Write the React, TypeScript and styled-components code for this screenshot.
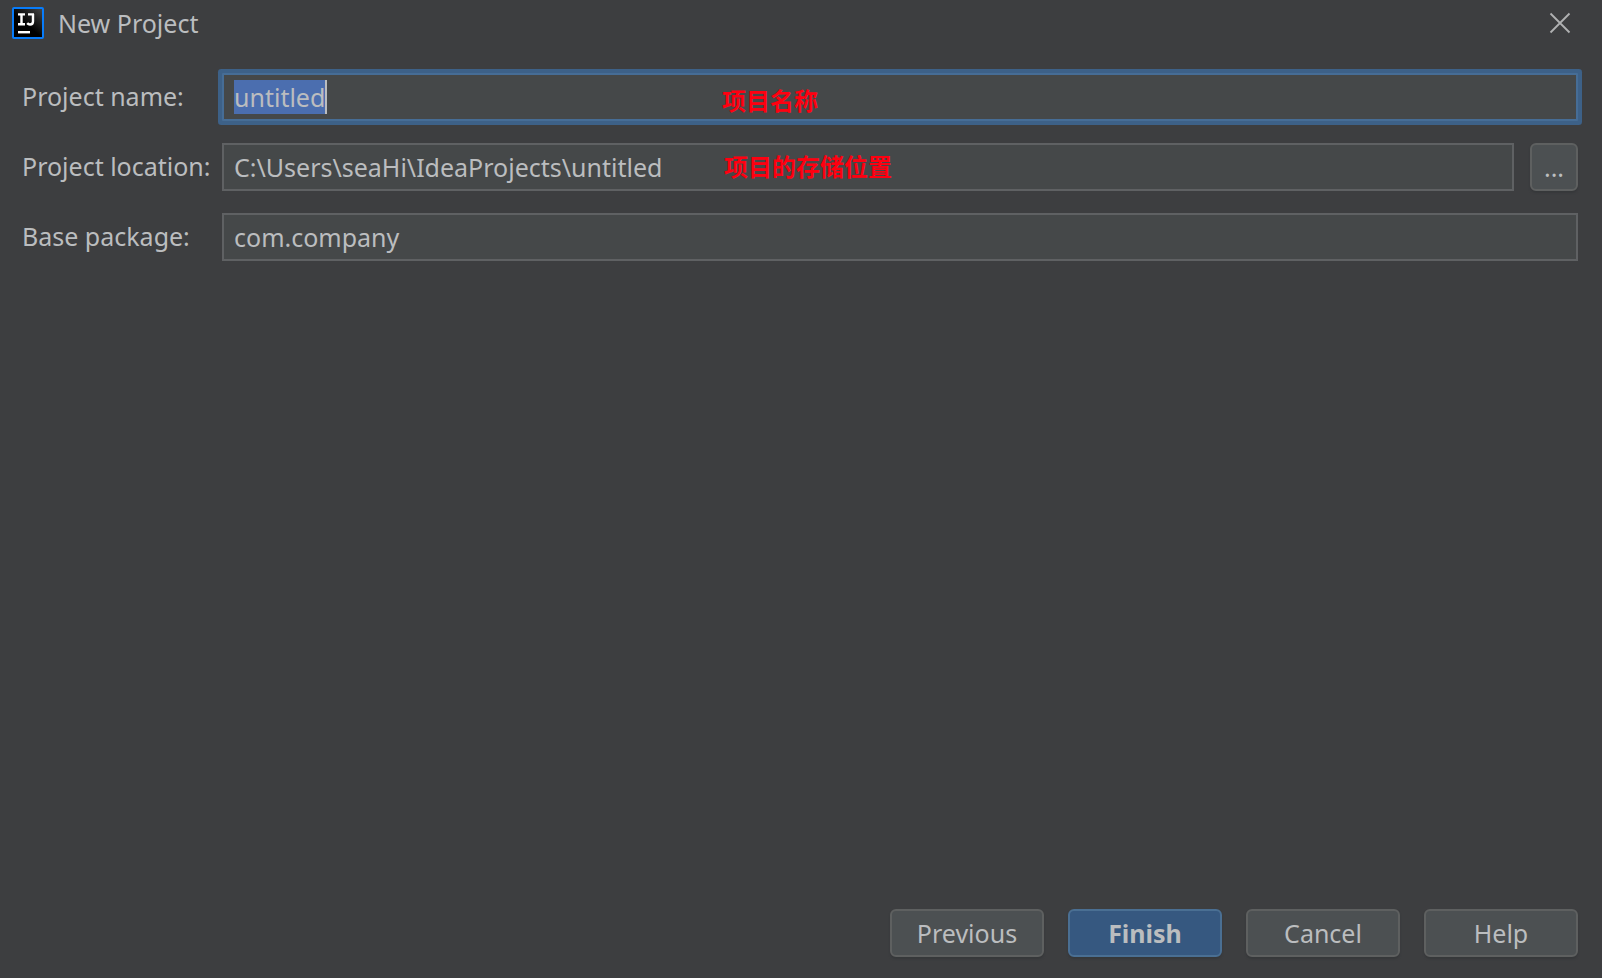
import React, { useEffect, useRef } from "react";
import styled, { createGlobalStyle, css } from "styled-components";

const GlobalStyle = createGlobalStyle`
  *, *::before, *::after { box-sizing: border-box; }
  html, body { margin: 0; background: #3d3e40; }
  body, input, button {
    font-family: "Noto Sans", "Noto Sans CJK SC", sans-serif;
    font-size: 25px;
    line-height: 34px;
    color: #bbbdbf;
  }
`;

const Dialog = styled.main`
  display: flex;
  flex-direction: column;
  min-height: 100vh;
`;

const TitleBar = styled.header`
  display: flex;
  align-items: center;
  gap: 14px;
  height: 46px;
  padding: 0 26px 0 12px;
`;

const Title = styled.h1`
  flex: 1;
  margin: 0;
  font-size: 25px;
  font-weight: 400;
`;

const CloseButton = styled.button`
  display: flex;
  align-items: center;
  justify-content: center;
  width: 32px;
  height: 32px;
  padding: 0;
  border: 0;
  background: none;
`;

const Form = styled.form`
  flex: 1;
  display: flex;
  flex-direction: column;
  padding: 27px 24px 21px 22px;
`;

const Fields = styled.div`
  flex: 1;
  display: flex;
  flex-direction: column;
  gap: 22px;
`;

const Row = styled.div`
  display: flex;
  align-items: center;
  height: 48px;
`;

const Label = styled.label`
  flex: 0 0 200px;
  padding-bottom: 3px;
  white-space: nowrap;
`;

const FieldBox = styled.div<{ $active?: boolean }>`
  position: relative;
  flex: 1;
  display: flex;
  align-items: center;
  min-width: 0;
  height: 48px;
  padding: 0 10px;
  border: 2px solid #5f6163;
  background: #454849;
  ${(p) =>
    p.$active &&
    css`
      border-color: #466d96;
      box-shadow: 0 0 0 4px #3d6188;
      border-radius: 1px;
    `}
`;

const Input = styled.input<{ $fit?: boolean }>`
  flex: ${(p) => (p.$fit ? "0 0 auto" : "1")};
  ${(p) => p.$fit && "field-sizing: content;"}
  min-width: 0;
  height: 34px;
  padding: 0;
  border: 0;
  outline: 0;
  background: none;
  &::selection {
    background: #4b6eaf;
    color: #bbbdbf;
  }
`;

const Caret = styled.span`
  width: 2px;
  height: 34px;
  background: #bbbdbf;
`;

const Note = styled.span<{ $x: number; $y: number }>`
  position: absolute;
  left: ${(p) => p.$x}px;
  top: ${(p) => p.$y}px;
  line-height: 36px;
  font-family: "Noto Sans CJK SC", sans-serif;
  font-size: 24px;
  font-weight: 700;
  color: #ff0010;
  white-space: nowrap;
  pointer-events: none;
`;

const Button = styled.button<{ $primary?: boolean; $square?: boolean }>`
  width: ${(p) => (p.$square ? "48px" : "154px")};
  height: 48px;
  padding: 0;
  border: 2px solid ${(p) => (p.$primary ? "#4a6f93" : "#5e6060")};
  border-radius: 6px;
  background: ${(p) => (p.$primary ? "#365880" : "#4c5052")};
  box-shadow: 0 2px 2px #36383a;
  font-weight: ${(p) => (p.$primary ? 700 : 400)};
`;

const BrowseButton = styled(Button)`
  margin-left: 16px;
`;

const Actions = styled.footer`
  display: flex;
  justify-content: flex-end;
  gap: 24px;
`;

function AppLogo() {
  return (
    <svg width="32" height="32" viewBox="0 0 32 32" aria-hidden="true">
      <defs>
        <linearGradient id="logoFill" x1="1" y1="0" x2="0.5" y2="0.6">
          <stop offset="0" stopColor="#4a4a4a" />
          <stop offset="1" stopColor="#000" />
        </linearGradient>
      </defs>
      <rect x="1" y="1" width="30" height="30" rx="1" fill="url(#logoFill)" stroke="#087cfa" strokeWidth="2" />
      <g fill="none" stroke="#fff" strokeWidth="2.4">
        <path d="M6 7.4h7M9.5 7v11M6 17.2h7" />
        <path d="M16 7.4h6M21 7v7.5q0 3-3 3-1.6 0-2.8-1.4" />
      </g>
      <rect x="6" y="24" width="12" height="2.4" fill="#fff" />
    </svg>
  );
}

export default function App() {
  const nameRef = useRef<HTMLInputElement>(null);

  useEffect(() => {
    nameRef.current?.focus();
    nameRef.current?.select();
  }, []);

  return (
    <>
      <GlobalStyle />
      <Dialog>
        <TitleBar>
          <AppLogo />
          <Title>New Project</Title>
          <CloseButton type="button" aria-label="Close">
            <svg width="22" height="22" viewBox="0 0 22 22" aria-hidden="true">
              <path d="M1.5 1.5l19 19M20.5 1.5l-19 19" fill="none" stroke="#b0b1b2" strokeWidth="1.8" />
            </svg>
          </CloseButton>
        </TitleBar>
        <Form onSubmit={(e) => e.preventDefault()}>
          <Fields>
            <Row>
              <Label htmlFor="name">Project name:</Label>
              <FieldBox $active>
                <Input id="name" ref={nameRef} $fit defaultValue="untitled" spellCheck={false} />
                <Caret />
                <Note $x={498} $y={7}>项目名称</Note>
              </FieldBox>
            </Row>
            <Row>
              <Label htmlFor="location">Project location:</Label>
              <FieldBox>
                <Input id="location" defaultValue={"C:\\Users\\seaHi\\IdeaProjects\\untitled"} spellCheck={false} />
                <Note $x={500} $y={3}>项目的存储位置</Note>
              </FieldBox>
              <BrowseButton type="button" $square aria-label="Browse">...</BrowseButton>
            </Row>
            <Row>
              <Label htmlFor="package">Base package:</Label>
              <FieldBox>
                <Input id="package" defaultValue="com.company" spellCheck={false} />
              </FieldBox>
            </Row>
          </Fields>
          <Actions>
            <Button type="button">Previous</Button>
            <Button type="submit" $primary>Finish</Button>
            <Button type="button">Cancel</Button>
            <Button type="button">Help</Button>
          </Actions>
        </Form>
      </Dialog>
    </>
  );
}
